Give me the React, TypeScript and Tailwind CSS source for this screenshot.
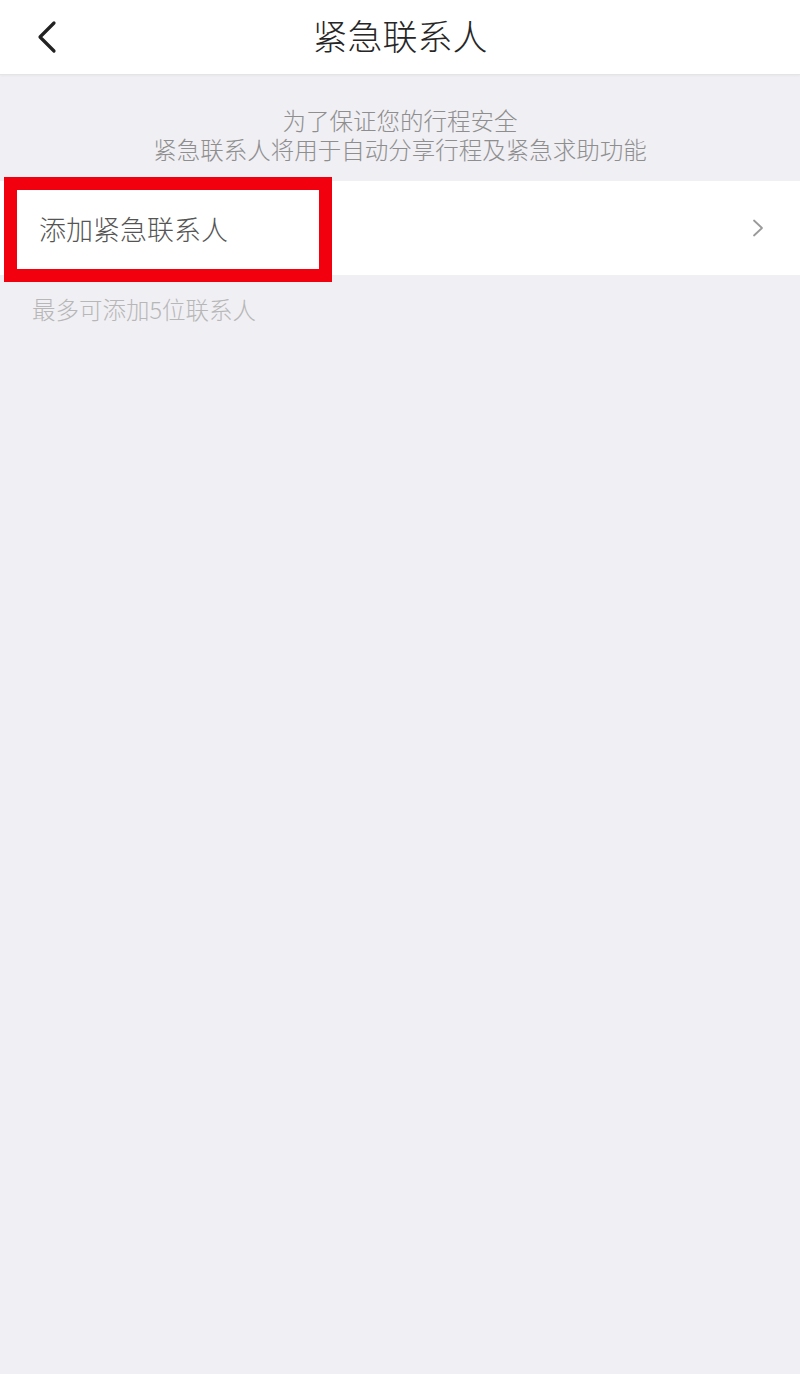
import React from "react";

export default function App() {
  const font = { fontFamily: '"Noto Sans CJK SC", "Noto Sans", sans-serif' };
  return (
    <div className="w-[800px] h-[1374px] bg-[#f0eff4] flex flex-col" style={font}>
      <div className="h-[75px] bg-white flex items-center relative border-b border-[#e4e4e4] shadow-[0_1px_2px_rgba(0,0,0,0.04)]">
        <div className="pl-[36px] w-[120px] flex items-center">
          <svg width="22" height="34" viewBox="0 0 22 34" fill="none">
            <path d="M18 3 L4 17 L18 31" stroke="#222" strokeWidth="3.2" strokeLinecap="round" strokeLinejoin="round" />
          </svg>
        </div>
        <div className="flex-1 text-center text-[35px] text-[#262626] font-light leading-none pr-[120px] -mt-[6px]">紧急联系人</div>
      </div>
      <div className="pt-[31px] pb-[17px] text-center text-[23.5px] leading-[29px] text-[#8e8e8e] font-light">
        <div>为了保证您的行程安全</div>
        <div>紧急联系人将用于自动分享行程及紧急求助功能</div>
      </div>
      <div className="relative h-[94px] bg-white flex items-center justify-between pl-[39px] pr-[36px]">
        <span className="text-[27px] text-[#555] font-light leading-none">添加紧急联系人</span>
        <svg width="12" height="18" viewBox="0 0 12 18" fill="none">
          <path d="M2 1.5 L10 9 L2 16.5" stroke="#9a9a9a" strokeWidth="1.8" strokeLinecap="round" strokeLinejoin="round" />
        </svg>
        <div className="absolute left-[4px] top-[-4px] w-[328px] h-[105px] border-[13px] border-[#f2000d] pointer-events-none" />
      </div>
      <div className="pl-[32px] pt-[23px] text-[23.5px] text-[#b7b7b7] font-light leading-none">最多可添加5位联系人</div>
    </div>
  );
}
